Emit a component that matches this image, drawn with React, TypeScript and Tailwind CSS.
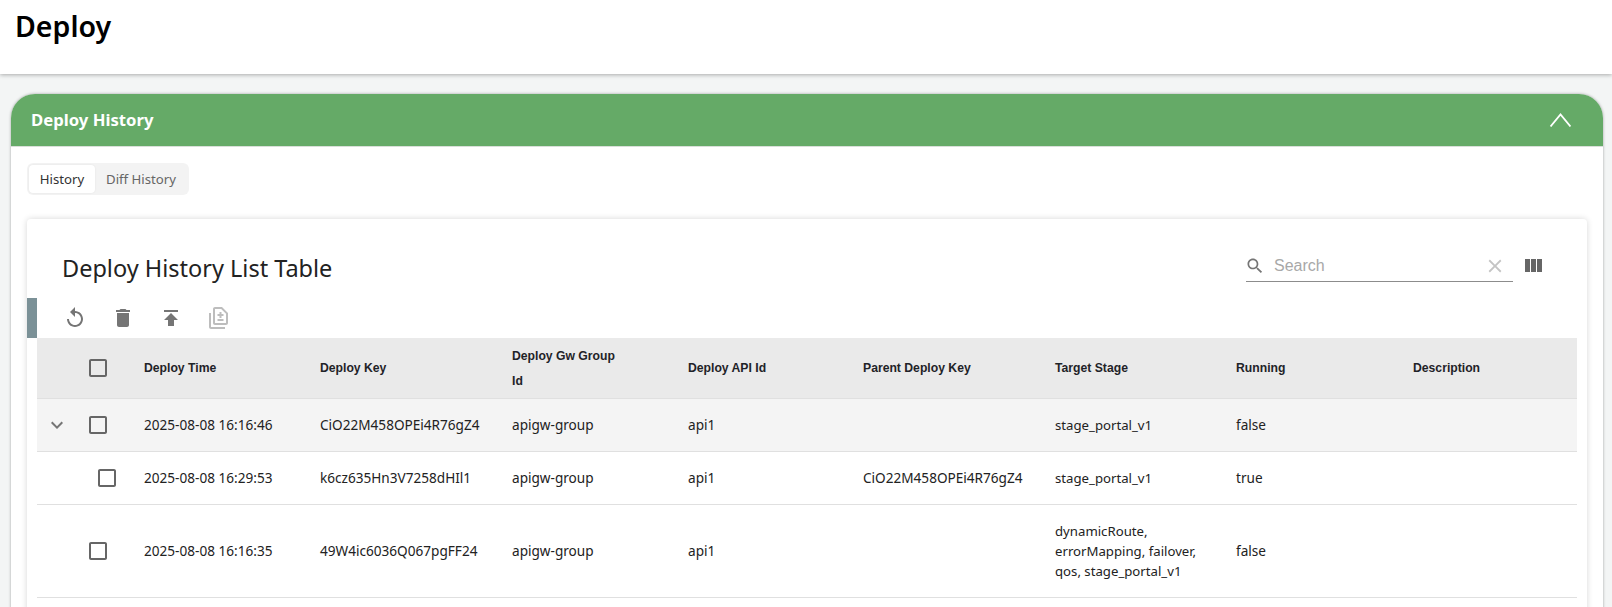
import React from 'react';

const paths = {
  replay: 'M12 5V1L7 6l5 5V7c3.31 0 6 2.69 6 6s-2.69 6-6 6-6-2.69-6-6H4c0 4.42 3.58 8 8 8s8-3.58 8-8-3.58-8-8-8z',
  trash: 'M6 19c0 1.1.9 2 2 2h8c1.1 0 2-.9 2-2V7H6v12zM19 4h-3.5l-1-1h-5l-1 1H5v2h14V4z',
  publish: 'M5 4v2h14V4H5zm0 10h4v6h6v-6h4l-7-7-7 7z',
  difference: 'M18 23H4c-1.1 0-2-.9-2-2V7h2v14h14v2zM15 1H8c-1.1 0-1.99.9-1.99 2L6 17c0 1.1.89 2 1.99 2H19c1.1 0 2-.9 2-2V7l-6-6zm4 16H8V3h6.17L19 7.83V17zM10.5 15h6v-2h-6v2zM12.5 12h2v-2h2V8h-2V6h-2v2h-2v2h2v2z',
  search: 'M15.5 14h-.79l-.28-.27C15.41 12.59 16 11.11 16 9.5 16 5.91 13.09 3 9.5 3S3 5.91 3 9.5 5.91 16 9.5 16c1.61 0 3.09-.59 4.23-1.57l.27.28v.79l5 4.99L20.49 19l-4.99-5zm-6 0C7.01 14 5 11.99 5 9.5S7.01 5 9.5 5 14 7.01 14 9.5 11.99 14 9.5 14z',
  clear: 'M19 6.41L17.59 5 12 10.59 6.41 5 5 6.41 10.59 12 5 17.59 6.41 19 12 13.41 17.59 19 19 17.59 13.41 12z',
  columns: 'M10 18h5V5h-5v13zm-6 0h5V5H4v13zM16 5v13h5V5h-5z',
  box: 'M19 5v14H5V5h14m0-2H5c-1.1 0-2 .9-2 2v14c0 1.1.9 2 2 2h14c1.1 0 2-.9 2-2V5c0-1.1-.9-2-2-2z',
  chevron: 'M16.59 8.59L12 13.17 7.41 8.59 6 10l6 6 6-6z',
};

const Icon = ({ name, className }: { name: keyof typeof paths; className: string }) => (
  <svg viewBox="0 0 24 24" fill="currentColor" className={className}>
    <path d={paths[name]} />
  </svg>
);

const columns = ['Deploy Time', 'Deploy Key', 'Deploy Gw Group Id', 'Deploy API Id', 'Parent Deploy Key', 'Target Stage', 'Running', 'Description'];

const rows = [
  { time: '2025-08-08 16:16:46', key: 'CiO22M458OPEi4R76gZ4', api: 'api1', parent: '', stage: 'stage_portal_v1', running: 'false', expanded: true, child: false },
  { time: '2025-08-08 16:29:53', key: 'k6cz635Hn3V7258dHIl1', api: 'api1', parent: 'CiO22M458OPEi4R76gZ4', stage: 'stage_portal_v1', running: 'true', expanded: false, child: true },
  { time: '2025-08-08 16:16:35', key: '49W4ic6036Q067pgFF24', api: 'api1', parent: '', stage: 'dynamicRoute, errorMapping, failover, qos, stage_portal_v1', running: 'false', expanded: false, child: false },
];

const App = () => {
  return (
    <div className="h-[607px] overflow-hidden bg-[#f3f5f5] font-['Noto_Sans','Open_Sans',sans-serif] text-black">
      <header className="h-[74px] bg-white pl-[15px] pt-[6px] shadow-[0_1px_4px_rgba(0,0,0,0.3)]">
        <h1 className="text-[28.5px] leading-[40px] font-semibold">Deploy</h1>
      </header>

      <div className="pt-[20px] pl-[11px] pr-[9px]">
        <section className="rounded-t-[24px] bg-white shadow-[0_0_3px_rgba(0,0,0,0.35)]">
          <div className="flex h-[53px] items-center justify-between rounded-t-[24px] border-b border-[#d9dfd9] bg-[#65aa67] pl-[20px] pr-[32px]">
            <h2 className="text-[16.7px] font-bold text-white">Deploy History</h2>
            <svg viewBox="0 0 21 14" fill="none" stroke="white" strokeWidth="1.8" className="h-[14px] w-[21px]">
              <path d="M0.5 13.5 L10.5 1.5 L20.5 13.5" />
            </svg>
          </div>

          <div className="px-[16px] pt-[16px] pb-[40px]">
            <div className="flex h-[32px] w-[162px] items-center rounded-[6px] bg-[#f3f3f3] pl-[2px] text-[13.2px]">
              <div className="flex h-[28px] w-[66px] items-center justify-center rounded-[4px] bg-white pt-[2px] text-[#333] shadow-[0_0_2px_rgba(0,0,0,0.08)]">History</div>
              <div className="flex-1 pt-[2px] pr-[2px] text-center text-[#666]">Diff History</div>
            </div>

            <div className="mt-[24px] rounded-[4px] bg-white pb-[60px] shadow-[0_0_6px_rgba(0,0,0,0.16)]">
              <div className="flex h-[79px] items-start justify-between pt-[32px] pl-[35px] pr-[42px]">
                <h3 className="text-[23.5px] leading-[34px] font-normal text-[#222]">Deploy History List Table</h3>
                <div className="mt-[-1px] flex items-center gap-[8px] font-['Liberation_Sans',sans-serif]">
                  <div className="flex h-[32px] w-[267px] items-center border-b border-[#8c8c8c]">
                    <Icon name="search" className="ml-[-1px] h-[20px] w-[20px] text-[#757575]" />
                    <span className="ml-[9px] flex-1 text-[16px] text-[#a8a8a8]">Search</span>
                    <Icon name="clear" className="mr-[7px] h-[22px] w-[22px] text-[#c4c4c4]" />
                  </div>
                  <Icon name="columns" className="h-[24px] w-[24px] text-[#666]" />
                </div>
              </div>

              <div className="flex h-[40px]">
                <div className="w-[10px] bg-[#7b9197]" />
                <div className="flex items-center gap-[24px] pl-[26px]">
                  <Icon name="replay" className="h-[24px] w-[24px] text-[#757575]" />
                  <Icon name="trash" className="h-[24px] w-[24px] text-[#757575]" />
                  <Icon name="publish" className="h-[24px] w-[24px] text-[#757575]" />
                  <Icon name="difference" className="h-[24px] w-[24px] text-[#bdbdbd]" />
                </div>
              </div>

              <div className="pl-[10px] pr-[10px]">
                <table className="w-full table-fixed border-collapse text-left text-[13.6px] text-[#222]">
                  <colgroup>
                    <col className="w-[52px]" />
                    <col className="w-[55px]" />
                    <col className="w-[176px]" />
                    <col className="w-[192px]" />
                    <col className="w-[176px]" />
                    <col className="w-[175px]" />
                    <col className="w-[192px]" />
                    <col className="w-[181px]" />
                    <col className="w-[177px]" />
                    <col />
                  </colgroup>
                  <thead>
                    <tr className="h-[60px] border-b border-[#e0e0e0] bg-[#eaeaea]">
                      <th />
                      <th className="font-normal">
                        <Icon name="box" className="h-[24px] w-[24px] -translate-x-[3px] text-[#666]" />
                      </th>
                      {columns.map((col) => (
                        <th key={col} className={`pt-[2px] font-['Liberation_Sans',sans-serif] text-[12.2px] leading-[25px] font-bold text-[#1f2328] ${col === 'Deploy Gw Group Id' ? 'pr-[60px]' : 'pr-[16px]'}`}>
                          {col}
                        </th>
                      ))}
                    </tr>
                  </thead>
                  <tbody>
                    {rows.map((row) => (
                      <tr key={row.time} className={`border-b border-[#e0e0e0] ${row.expanded ? 'bg-[#f4f4f4]' : ''}`}>
                        <td className={row.stage.length > 20 ? 'h-[93px]' : 'h-[53px]'}>
                          {row.expanded && <Icon name="chevron" className="ml-[8px] h-[24px] w-[24px] text-[#757575]" />}
                        </td>
                        <td>
                          <Icon name="box" className={`h-[24px] w-[24px] text-[#666] ${row.child ? 'translate-x-[6px]' : '-translate-x-[3px]'}`} />
                        </td>
                        <td className="pt-[2px]">{row.time}</td>
                        <td className="pt-[2px]">{row.key}</td>
                        <td className="pt-[2px]">apigw-group</td>
                        <td className="pt-[2px]">{row.api}</td>
                        <td className="pt-[2px]">{row.parent}</td>
                        <td className="pr-[20px] text-[13.2px] leading-[20px]">{row.stage}</td>
                        <td className="pt-[2px]">{row.running}</td>
                        <td />
                      </tr>
                    ))}
                  </tbody>
                </table>
              </div>
            </div>
          </div>
        </section>
      </div>
    </div>
  );
};

export default App;
